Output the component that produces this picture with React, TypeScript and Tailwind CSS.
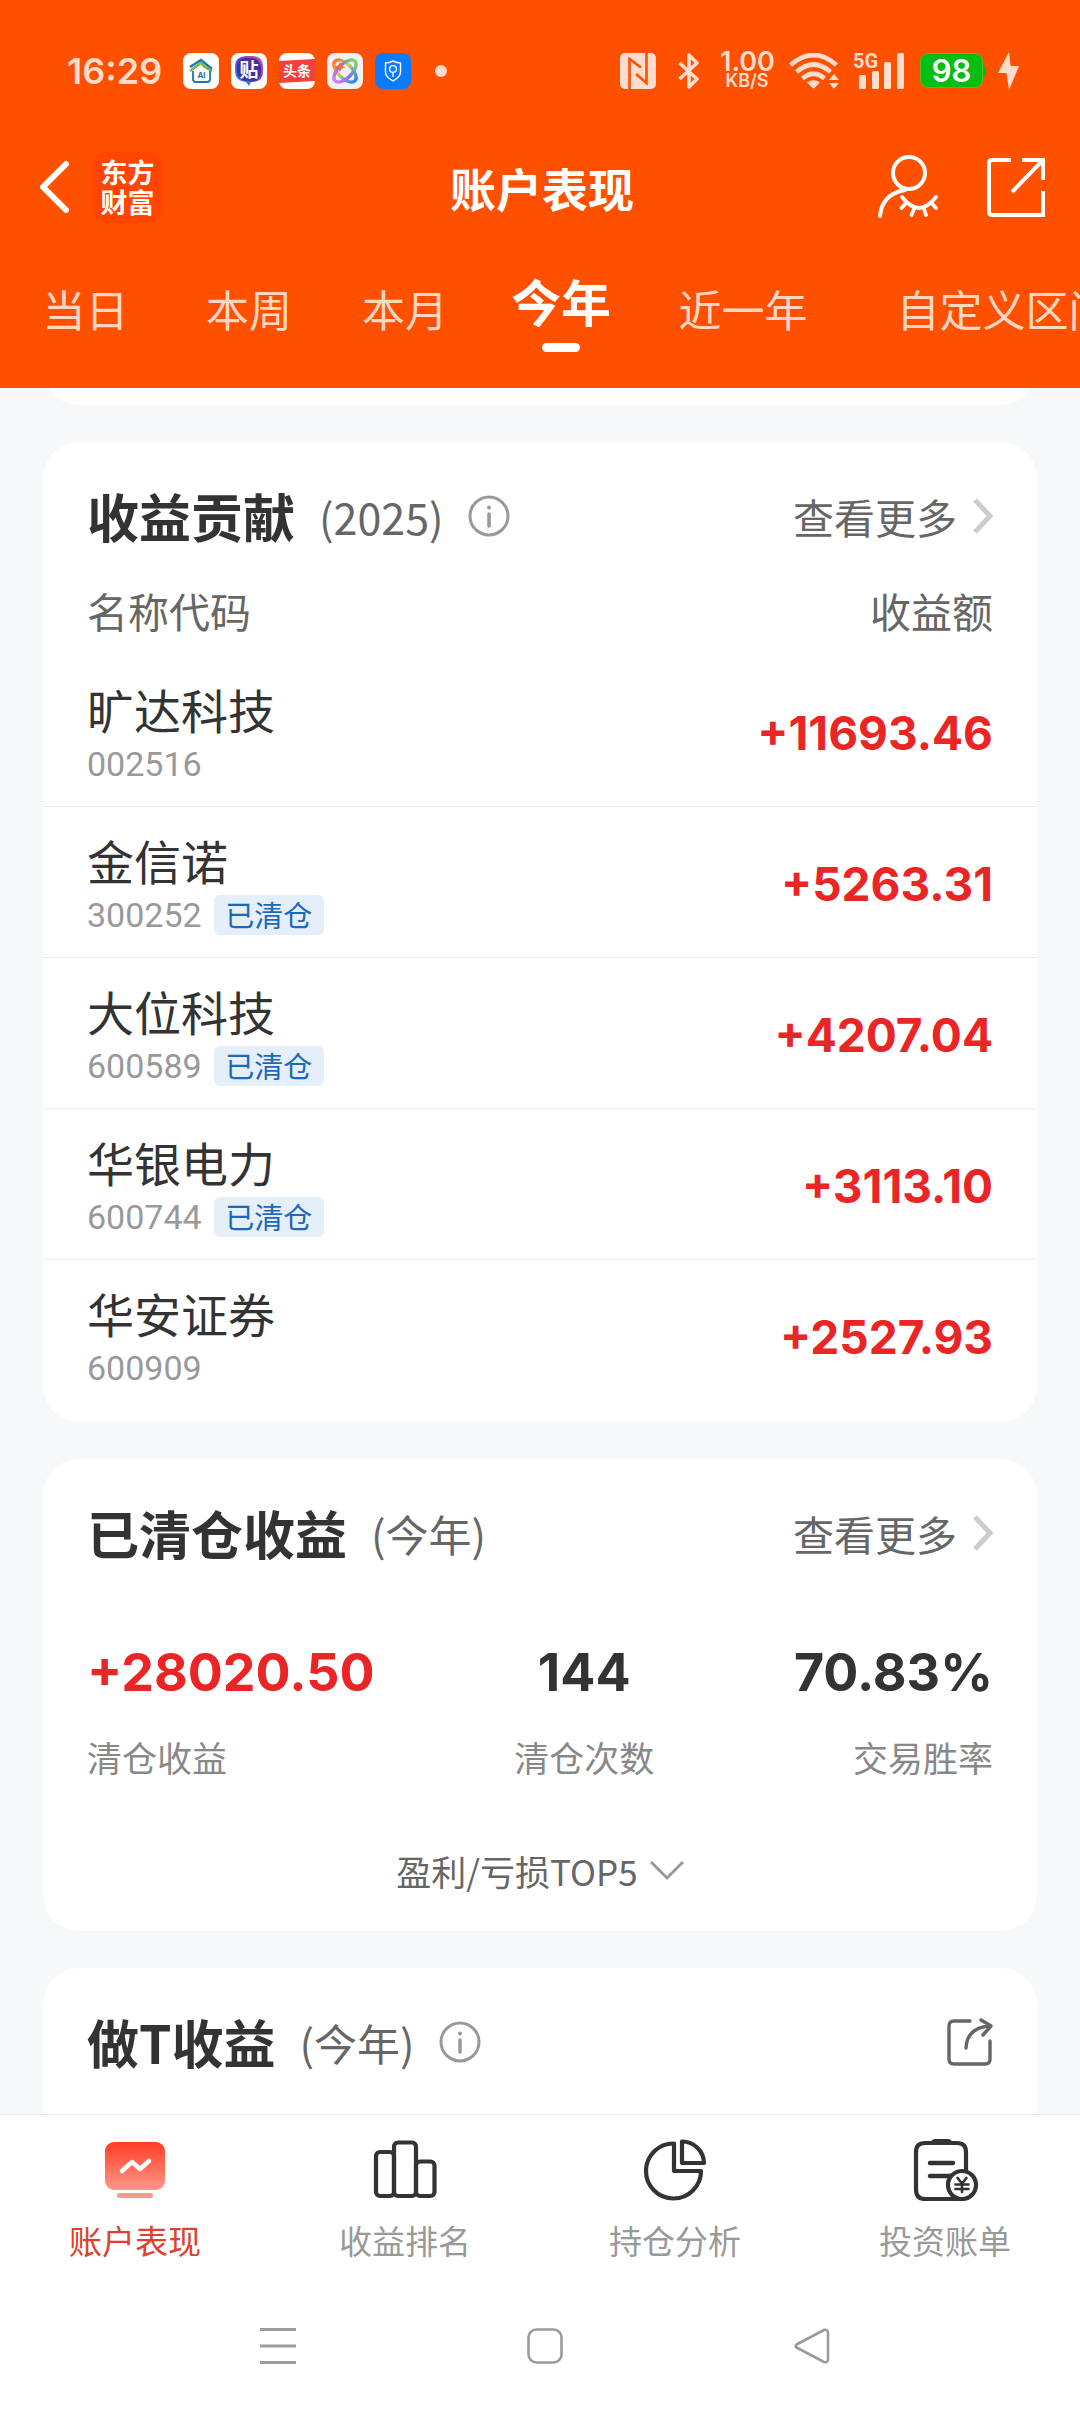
import { ReactNode } from "react";

const tabs = [
  { label: "当日", width: "w-[171px]" },
  { label: "本周", width: "w-[156px]" },
  { label: "本月", width: "w-[156px]" },
  { label: "今年", width: "w-[156px]", active: true },
  { label: "近一年", width: "w-[208px]" },
  { label: "自定义区间", width: "w-[314px]" },
];

const stocks = [
  { name: "旷达科技", code: "002516", amount: "+11693.46", cleared: false },
  { name: "金信诺", code: "300252", amount: "+5263.31", cleared: true },
  { name: "大位科技", code: "600589", amount: "+4207.04", cleared: true },
  { name: "华银电力", code: "600744", amount: "+3113.10", cleared: true },
  { name: "华安证券", code: "600909", amount: "+2527.93", cleared: false },
];

const summary = [
  { label: "清仓收益", value: "+28020.50", align: "text-left", color: "text-[#ea2526]" },
  { label: "清仓次数", value: "144", align: "text-center", color: "text-[#333]" },
  { label: "交易胜率", value: "70.83%", align: "text-right", color: "text-[#333]" },
];

const StatusBar = () => (
  <div className="flex h-[141px] items-center justify-between pl-[67px] pr-[61px] text-[#ffdccb]">
    <div className="flex items-center">
      <span className="w-[116px] font-[Inter] text-[36px] leading-[40px] font-semibold">
        16:29
      </span>
      <div className="flex items-center gap-3">
        <svg width="36" height="36" viewBox="0 0 36 36">
          <rect width="36" height="36" rx="8" fill="#fff" />
          <path d="M7 14 L18 7 L29 16" fill="none" stroke="#1d74b8" strokeWidth="2.4" />
          <path d="M7 18 L18 10 L22 14 L29 18" fill="none" stroke="#7ab648" strokeWidth="2.6" />
          <path d="M10 18 v8 q0 3 3 3 h11 q3 0 3-3 v-8" fill="none" stroke="#1d74b8" strokeWidth="1.8" />
          <text x="18.5" y="25" fontSize="8" fontWeight="700" fontFamily="Inter" textAnchor="middle" fill="#1d74b8">
            AI
          </text>
        </svg>
        <svg width="36" height="36" viewBox="0 0 36 36">
          <defs>
            <linearGradient id="tieba" x1="0" y1="1" x2="1" y2="0">
              <stop offset="0" stopColor="#21b5ff" />
              <stop offset="0.5" stopColor="#5a3fd0" />
              <stop offset="1" stopColor="#f4577e" />
            </linearGradient>
          </defs>
          <rect width="36" height="36" rx="8" fill="#fff" />
          <path d="M15 3 h7 q10 1 10 10 v6 q0 9 -10 10 h-2 l-2 4 l-3 -4 q-11 -1 -11 -10 v-6 q0 -9 11 -10z" fill="url(#tieba)" />
          <rect x="6" y="5" width="24" height="23" rx="9" fill="#44319f" />
          <text x="18" y="24" fontSize="19" fontWeight="700" fontFamily="Noto Sans CJK SC" textAnchor="middle" fill="#fff">
            贴
          </text>
        </svg>
        <svg width="36" height="36" viewBox="0 0 36 36">
          <rect width="36" height="36" rx="8" fill="#fff" />
          <path d="M0 8 L36 6 V28 L0 30z" fill="#f2403d" />
          <text x="18" y="23" fontSize="14" fontWeight="700" fontFamily="Noto Sans CJK SC" textAnchor="middle" fill="#fff">
            头条
          </text>
        </svg>
        <svg width="36" height="36" viewBox="0 0 36 36">
          <defs>
            <linearGradient id="loop" x1="0" y1="0" x2="1" y2="0">
              <stop offset="0" stopColor="#ff7a2b" />
              <stop offset="0.4" stopColor="#e9c93c" />
              <stop offset="0.7" stopColor="#35c7c0" />
              <stop offset="1" stopColor="#3c7bf5" />
            </linearGradient>
            <linearGradient id="loop2" x1="0" y1="0" x2="1" y2="0">
              <stop offset="0" stopColor="#d77cf0" />
              <stop offset="0.5" stopColor="#7d6cf0" />
              <stop offset="1" stopColor="#7ed957" />
            </linearGradient>
          </defs>
          <rect width="36" height="36" rx="8" fill="#f3f1f3" />
          <ellipse cx="18" cy="18" rx="14" ry="7" transform="rotate(45 18 18)" fill="none" stroke="url(#loop)" strokeWidth="3.4" />
          <ellipse cx="18" cy="18" rx="14" ry="7" transform="rotate(-45 18 18)" fill="none" stroke="url(#loop2)" strokeWidth="3.4" />
          <path d="M13 9 l1.500 4 l4 1 l-4 2 l-2 3 l-1 -4 l-4 -1 l4 -2z" fill="#ff6a2b" />
        </svg>
        <svg width="36" height="36" viewBox="0 0 36 36" fill="none" stroke="#fff" strokeWidth="1.4">
          <rect width="36" height="36" rx="8" fill="#0a7bff" stroke="none" />
          <path d="M18 8 q4 2 7.500 2 v9 q0 5 -7.500 9 q-7.500 -4 -7.500 -9 v-9 q3.500 0 7.500 -2z" />
          <circle cx="18" cy="16" r="3.400" />
          <path d="M18 19.400 V24" />
        </svg>
        <span className="ml-3 h-3 w-3 rounded-full bg-[#ffdccb]" />
      </div>
    </div>

    <div className="flex items-center">
      <svg width="36" height="36" viewBox="0 0 36 36" className="mr-[22px]">
        <rect width="36" height="36" rx="5" fill="currentColor" />
        <path d="M9.500 36 V6 L21 14.500 M26.500 0 V30 L16 21" fill="none" stroke="#ff5000" strokeWidth="2.600" />
      </svg>
      <svg width="22" height="36" viewBox="0 0 22 36" className="mr-[20px]" fill="none" stroke="currentColor" strokeWidth="3.600" strokeLinejoin="round">
        <path d="M1.500 10 L19 26 L11 34 V2 L19 10 L1.500 26" />
      </svg>
      <div className="mr-[15px] w-[54px] text-center font-[Inter]">
        <div className="text-[27px] leading-[20px] font-semibold">1.00</div>
        <div className="text-[18px] leading-[18px] font-semibold">KB/S</div>
      </div>
      <svg width="50" height="36" viewBox="0 0 50 36" className="mr-[14px]" fill="none" stroke="currentColor" strokeWidth="4.600">
        <path d="M1.500 12 Q24.500 -8 47.500 12" />
        <path d="M7.500 19 Q24.500 4 41.500 19" />
        <path d="M13.500 25.500 Q24.500 16 35.500 25.500" />
        <path d="M24.500 36 L18 29.500 Q24.500 25 31 29.500z" fill="currentColor" stroke="none" />
        <path d="M45 21 L50 27 H40z M45 36 L50 30 H40z" fill="currentColor" stroke="none" />
      </svg>
      <svg width="52" height="48" viewBox="0 -6 52 48" className="mr-[15px]" fill="currentColor">
        <text x="0" y="15" fontSize="20" fontWeight="700" fontFamily="Roboto">
          5G
        </text>
        <rect x="6" y="22" width="7" height="14" rx="1.500" />
        <rect x="19" y="18" width="7" height="18" rx="1.500" />
        <rect x="31" y="9" width="7" height="27" rx="1.500" />
        <rect x="44" y="0" width="7" height="36" rx="1.500" />
      </svg>
      <div className="flex items-center">
        <div className="flex h-[35px] w-[63px] items-center justify-center rounded-lg border border-[#58bb2c] bg-[#06bd14] font-[Inter] text-[31px] leading-[35px] font-semibold text-white">
          98
        </div>
        <div className="h-3 w-[3px] rounded-r bg-[#06bd14]" />
      </div>
      <svg width="21" height="38" viewBox="0 0 21 38" className="ml-[12px]" fill="currentColor">
        <path d="M11 0 L0 21 H8.500 L11 38 L21 14 H12.500z" />
      </svg>
    </div>
  </div>
);

const InfoIcon = () => (
  <svg width="42" height="42" viewBox="0 0 42 42" fill="none" stroke="#999" strokeWidth="3">
    <circle cx="21" cy="21" r="19" />
    <path d="M21 19 V31" strokeWidth="3.600" strokeLinecap="round" />
    <circle cx="21" cy="12.500" r="2" fill="#999" stroke="none" />
  </svg>
);

const ViewMore = () => (
  <a href="#" className="flex items-center gap-4 text-[41px] leading-[60px] text-[#666]">
    查看更多
    <svg width="20" height="36" viewBox="0 0 20 36" fill="none" stroke="#ccc" strokeWidth="5">
      <path d="M2 2 L17 18 L2 34" />
    </svg>
  </a>
);

const CardTitle = ({
  title,
  note,
  info,
  action,
}: {
  title: string;
  note: string;
  info?: boolean;
  action: ReactNode;
}) => (
  <div className="flex h-[80px] items-center justify-between px-[44px]">
    <div className="flex items-center">
      <h2 className="text-[52px] leading-[60px] font-bold text-[#333]">{title}</h2>
      <span className="ml-6 text-[43px] leading-[60px] text-[#666]">{note}</span>
      {info && (
        <button type="button" aria-label="说明" className="ml-6">
          <InfoIcon />
        </button>
      )}
    </div>
    {action}
  </div>
);

const navItems = [
  {
    label: "账户表现",
    active: true,
    icon: (
      <svg width="64" height="60" viewBox="0 0 64 60" fill="none">
        <defs>
          <linearGradient id="screen" x1="0" y1="0" x2="0" y2="1">
            <stop offset="0" stopColor="#ff3d25" />
            <stop offset="1" stopColor="#ff978a" />
          </linearGradient>
        </defs>
        <rect x="2" y="2" width="60" height="48" rx="9" fill="url(#screen)" />
        <rect x="14" y="53" width="36" height="5" rx="2.500" fill="#f59b8e" />
        <path d="M19 31 L29 22 L37 29 L46 21" stroke="#fff" strokeWidth="4.500" strokeLinecap="round" strokeLinejoin="round" />
      </svg>
    ),
  },
  {
    label: "收益排名",
    icon: (
      <svg width="64" height="60" viewBox="0 0 64 60" fill="none" stroke="#333" strokeWidth="4.200">
        <rect x="3" y="12" width="18" height="44" rx="4" />
        <rect x="21" y="2.500" width="22" height="53.500" rx="4" />
        <rect x="43" y="21.500" width="18.500" height="34.500" rx="4" />
      </svg>
    ),
  },
  {
    label: "持仓分析",
    icon: (
      <svg width="64" height="62" viewBox="0 0 64 62" fill="none" stroke="#333" strokeWidth="4.200" strokeLinejoin="round">
        <path d="M31 4.500 A27.500 27.500 0 1 0 58 32 H31z" />
        <path d="M39 2.500 V24 H61 A22 22 0 0 0 39 2.500z" />
      </svg>
    ),
  },
  {
    label: "投资账单",
    icon: (
      <svg width="68" height="62" viewBox="0 0 68 62" fill="none" stroke="#333" strokeWidth="4.200" strokeLinecap="round">
        <path d="M55 31 V13 Q55 4 46 4 H14 Q5 4 5 13 V51 Q5 60 14 60 H48" />
        <path d="M19 4 Q21 0 24 0 H37 Q40 0 42 4z" fill="#333" stroke="none" />
        <path d="M19 24 H42 M19 37 H40" strokeWidth="4.500" />
        <circle cx="51" cy="46" r="14" fill="#fff" />
        <path d="M46.500 39 L51 44.500 L55.500 39 M51 45 V53 M44.500 45.500 H57.500 M44.500 50 H57.500" strokeWidth="2.600" />
      </svg>
    ),
  },
];

const App = () => {
  return (
    <div className="flex min-h-screen flex-col overflow-hidden bg-[#f7f8fa] font-['Noto_Sans_CJK_SC',sans-serif]">
      <header className="relative z-10 bg-[#ff5000] text-white">
        <StatusBar />
        <div className="grid h-[92px] grid-cols-3 items-center pl-[38px] pr-[34px]">
          <div className="flex items-center gap-[20px]">
            <button type="button" aria-label="返回">
              <svg width="34" height="56" viewBox="0 0 34 56" fill="none" stroke="#fff" strokeWidth="6" strokeLinecap="round" strokeLinejoin="round">
                <path d="M28 5 L5 28 L28 51" />
              </svg>
            </button>
            <div className="grid h-[71px] w-[71px] place-content-center rounded-2xl bg-[#ff4500] text-center text-[27px] leading-[30px] font-bold">
              <p>
                东方
                <br />
                财富
              </p>
            </div>
          </div>
          <h1 className="text-center text-[46px] leading-[60px] font-bold">账户表现</h1>
          <div className="flex items-center justify-end gap-[47px]">
            <button type="button" aria-label="隐藏账户">
              <svg width="62" height="64" viewBox="0 0 62 64" fill="none" stroke="#fff" strokeWidth="4" strokeLinecap="round">
                <circle cx="32" cy="18" r="16" />
                <path d="M28 35 Q5 39 3 61" />
                <path d="M25 42 Q42 64 59 42 M29 48 L24.500 53 M37 54 L34.500 60 M47 54 L49 60 M54.500 48 L59 53" strokeWidth="3.800" />
              </svg>
            </button>
            <button type="button" aria-label="分享">
              <svg width="60" height="62" viewBox="0 0 60 62" fill="none" stroke="#fff" strokeWidth="4">
                <path d="M25 4 H6 Q3 4 3 7 V56 Q3 59 6 59 H57 V35" />
                <path d="M36 4 H57 V24 M56 5 L26 36" />
              </svg>
            </button>
          </div>
        </div>
        <nav className="flex h-[155px] overflow-hidden pt-[49px]">
          {tabs.map((tab) => (
            <button
              key={tab.label}
              type="button"
              className={`flex shrink-0 flex-col items-center whitespace-nowrap ${tab.width}`}
            >
              {tab.active ? (
                <>
                  <span className="text-[50px] leading-[36px] font-bold">{tab.label}</span>
                  <span className="mt-[25px] h-[9px] w-[38px] rounded-full bg-white" />
                </>
              ) : (
                <span className="text-[43px] leading-[52px] text-[#ffd6c2]">{tab.label}</span>
              )}
            </button>
          ))}
        </nav>
      </header>

      <main className="flex flex-1 flex-col gap-[37px] px-[43px]">
        {/* tail of the card scrolled under the header */}
        <div className="-mt-[60px] h-[77px] rounded-b-[36px] bg-white" />

        <section className="rounded-[36px] bg-white pt-[34px] pb-[12px]">
          <CardTitle title="收益贡献" note="(2025)" info action={<ViewMore />} />
          <table className="w-full">
            <thead>
              <tr className="h-[99px] text-[41px] leading-[60px] text-[#666]">
                <th className="pt-2 pl-[44px] text-left font-normal">名称代码</th>
                <th className="pt-2 pr-[44px] text-right font-normal">收益额</th>
              </tr>
            </thead>
            <tbody>
              {stocks.map((stock) => (
                <tr key={stock.code} className="h-[151px] border-b border-[#ebecee] last:border-0">
                  <td className="pt-1 pl-[44px]">
                    <div className="text-[47px] leading-[56px] text-[#333]">{stock.name}</div>
                    <div className="mt-[7px] flex h-[40px] items-center gap-3 text-[#999]">
                      <span className="font-[Roboto] text-[34px] leading-[40px]">{stock.code}</span>
                      {stock.cleared && (
                        <span className="h-[40px] w-[110px] rounded-md bg-[#e5effa] text-center text-[29px] leading-[38px] text-[#1e68bb]">
                          已清仓
                        </span>
                      )}
                    </div>
                  </td>
                  <td className="pt-[6px] pr-[44px] text-right font-[Inter] text-[46px] font-bold text-[#ea2526]">
                    {stock.amount}
                  </td>
                </tr>
              ))}
            </tbody>
          </table>
        </section>

        <section className="rounded-[36px] bg-white pt-[34px] pb-[30px]">
          <CardTitle title="已清仓收益" note="(今年)" action={<ViewMore />} />
          <dl className="mt-[70px] flex justify-between px-[44px]">
            {summary.map((item) => (
              <div key={item.label} className={`flex flex-col-reverse gap-[30px] ${item.align}`}>
                <dt className="text-[35px] leading-[48px] text-[#888]">{item.label}</dt>
                <dd className={`font-[Inter] text-[52px] leading-[60px] font-bold ${item.color}`}>
                  {item.value}
                </dd>
              </div>
            ))}
          </dl>
          <button
            type="button"
            className="mx-auto mt-[60px] flex items-center gap-3 text-[35px] leading-[60px] text-[#666]"
          >
            盈利/亏损TOP5
            <svg width="34" height="20" viewBox="0 0 34 20" fill="none" stroke="#999" strokeWidth="3">
              <path d="M1 1 L17 17 L33 1" />
            </svg>
          </button>
        </section>

        <section className="flex-1 rounded-t-[36px] bg-white pt-[34px]">
          <CardTitle
            title="做T收益"
            note="(今年)"
            info
            action={
              <button type="button" aria-label="分享做T收益">
                <svg width="46" height="48" viewBox="0 0 46 48" fill="none" stroke="#666" strokeWidth="3.400" strokeLinecap="round" strokeLinejoin="round">
                  <path d="M23 3 H7 Q2 3 2 8 V41 Q2 46 7 46 H38 Q43 46 43 41 V23" />
                  <path d="M19 30 Q20 9 44 8 M34 2 L44 8 L36 17" />
                </svg>
              </button>
            }
          />
        </section>
      </main>

      <footer className="border-t border-[#ebebeb] bg-white">
        <nav className="grid grid-cols-4 pt-[24px]">
          {navItems.map((item) => (
            <a key={item.label} href="#" className="flex flex-col items-center gap-[20px]">
              <span className="flex h-[62px] items-center">{item.icon}</span>
              <span className={`text-[33px] leading-[38px] ${item.active ? "text-[#e0402c]" : "text-[#999]"}`}>
                {item.label}
              </span>
            </a>
          ))}
        </nav>
        <div className="grid grid-cols-3 justify-items-center pt-[69px] pr-[135px] pb-[48px] pl-[144px]">
          <button type="button" aria-label="最近任务">
            <svg width="36" height="36" viewBox="0 0 36 36" stroke="#9b9b9b" strokeWidth="3">
              <path d="M0 1.500 H36 M0 18 H36 M0 34.500 H36" />
            </svg>
          </button>
          <button type="button" aria-label="主屏幕">
            <svg width="36" height="36" viewBox="0 0 36 36" fill="none" stroke="#9b9b9b" strokeWidth="2.600">
              <rect x="1.500" y="1.500" width="33" height="33" rx="8" />
            </svg>
          </button>
          <button type="button" aria-label="后退">
            <svg width="36" height="36" viewBox="0 0 36 36" fill="none" stroke="#9b9b9b" strokeWidth="2.600" strokeLinejoin="round">
              <path d="M2.500 16.500 L30 2 Q34 1 34 5 V31 Q34 35 30 34 L2.500 19.500 Q1 18 2.500 16.500z" />
            </svg>
          </button>
        </div>
      </footer>
    </div>
  );
};

export default App;
